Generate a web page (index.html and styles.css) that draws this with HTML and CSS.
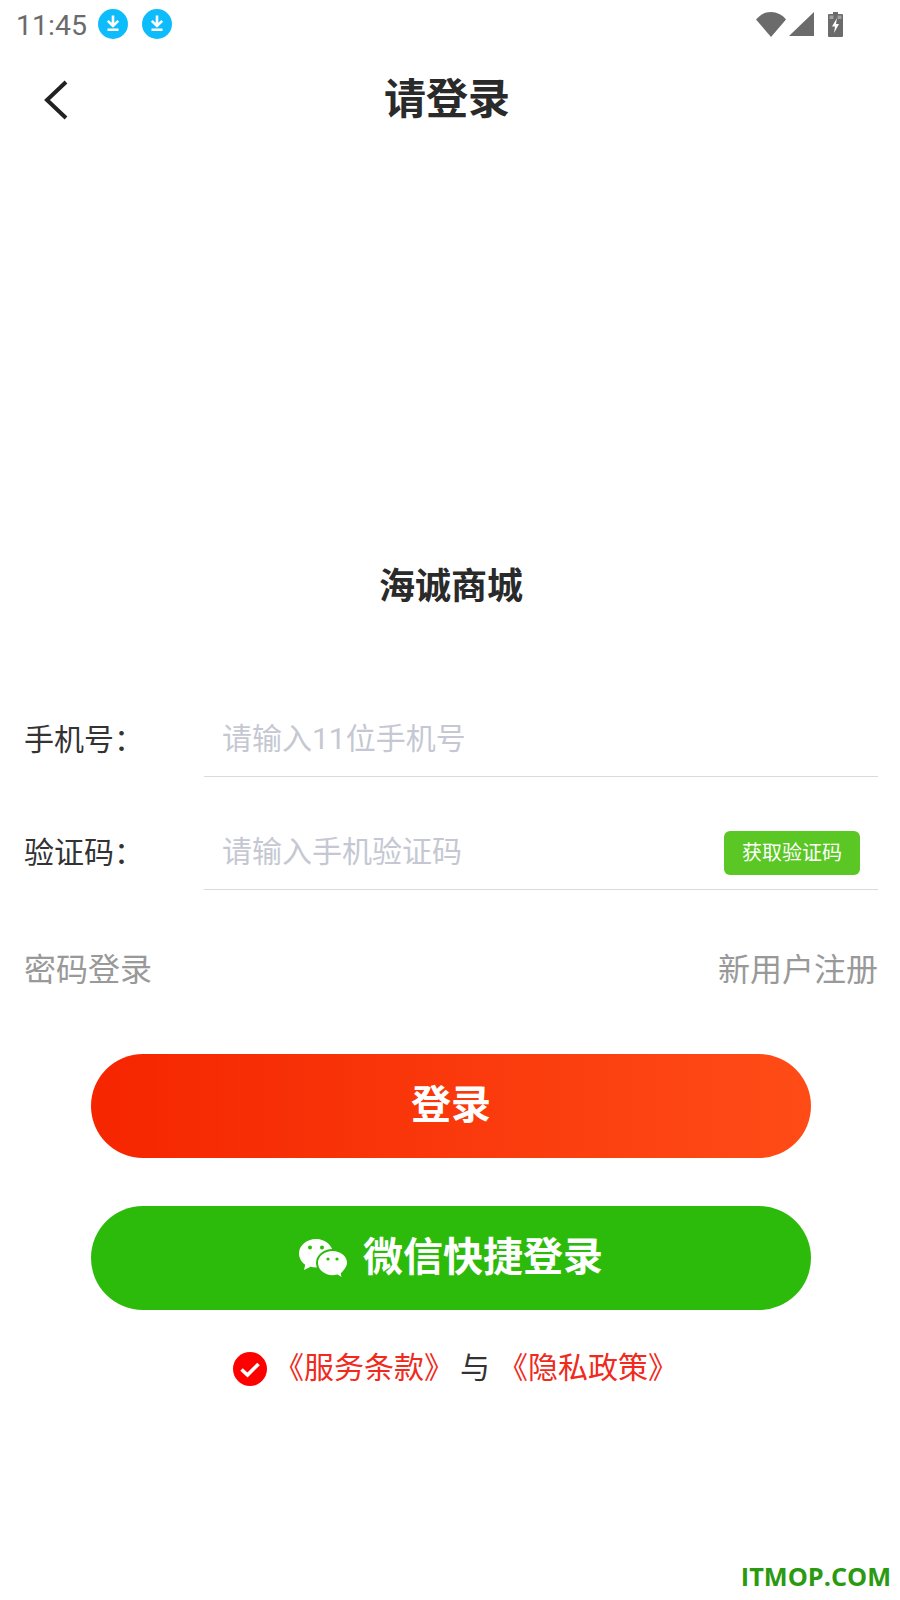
FILE: index.html
```html
<!DOCTYPE html>
<html lang="zh-CN">
<head>
<meta charset="utf-8">
<title>请登录</title>
<link rel="stylesheet" href="styles.css">
</head>
<body>
<div class="page">
  <div class="status">
    <span class="time">11:45</span>
    <svg class="dl" viewBox="0 0 30 30"><circle cx="15" cy="15" r="15" fill="#0dbcfb"/><path d="M15 6.500v10M9.800 11.800 15 17l5.200-5.200M9.500 20.800h11" fill="none" stroke="#fff" stroke-width="2.600"/></svg>
    <svg class="dl" viewBox="0 0 30 30"><circle cx="15" cy="15" r="15" fill="#0dbcfb"/><path d="M15 6.500v10M9.800 11.800 15 17l5.200-5.200M9.500 20.800h11" fill="none" stroke="#fff" stroke-width="2.600"/></svg>
    <span class="status-right">
      <svg class="wifi" viewBox="0 0 30 25"><path d="M0 7.500C4 2.800 9 0 15 0s11 2.800 15 7.500L15 25z" fill="#6b6b6b"/></svg>
      <svg class="signal" viewBox="0 0 25 24"><path d="M25 0v24H0z" fill="#6b6b6b"/></svg>
      <svg class="battery" viewBox="0 0 15 25"><path d="M5 0h5v2h4a1 1 0 0 1 1 1v21a1 1 0 0 1-1 1H1a1 1 0 0 1-1-1V3a1 1 0 0 1 1-1h4z" fill="#6b6b6b"/><path d="M1.500 3.500h4V7h-4zM9.500 3.500h4V7h-4z" fill="#a0a0a0"/><path d="M9 6 4 14.500h3L6 21l5-9H8z" fill="#fff"/></svg>
    </span>
  </div>
  <header class="nav">
    <svg class="back" viewBox="0 0 26 40"><path d="M23 2 4 20l19 18" fill="none" stroke="#222" stroke-width="4"/></svg>
    <h1 class="title">请登录</h1>
  </header>
  <div class="brand">海诚商城</div>
  <div class="form">
    <div class="row">
      <span class="label">手机号：</span>
      <div class="field"><span class="ph">请输入11位手机号</span></div>
    </div>
    <div class="row">
      <span class="label">验证码：</span>
      <div class="field"><span class="ph">请输入手机验证码</span><span class="code">获取验证码</span></div>
    </div>
  </div>
  <div class="links"><span>密码登录</span><span>新用户注册</span></div>
  <div class="btn btn-red"><span class="btn-text">登录</span></div>
  <div class="btn btn-green">
    <svg class="wx" viewBox="0 0 48 41"><path d="M17 0C7.600 0 0 6.500 0 14.500c0 4.500 2.400 8.500 6.200 11.200L5 31l6.500-3.200c1.800.5 3.600.7 5.500.7 9.400 0 17-6.300 17-14S26.400 0 17 0z" fill="#fff"/><path d="M33.500 11C25 11 18 16.800 18 24s7 13.200 15.500 13.200c1.800 0 3.500-.3 5-.7l5.500 3.500-1.200-5.200C46 31.500 49 28 49 24c0-7.200-7-13-15.500-13z" fill="#fff" stroke="#2cbb0b" stroke-width="2"/><circle cx="11" cy="8.500" r="2" fill="#2cbb0b"/><circle cx="23" cy="8.500" r="2" fill="#2cbb0b"/><circle cx="29" cy="20" r="1.600" fill="#2cbb0b"/><circle cx="38" cy="20" r="1.600" fill="#2cbb0b"/></svg>
    <span class="btn-text">微信快捷登录</span>
  </div>
  <div class="agree">
    <svg class="check" viewBox="0 0 34 34"><circle cx="17" cy="17" r="17" fill="#f00"/><path d="M8.500 17.500l6 5.500 11-11" fill="none" stroke="#fff" stroke-width="3.600"/></svg>
    <span class="red">《服务条款》</span><span class="and">与</span><span class="red">《隐私政策》</span>
  </div>
  <div class="mark">ITMOP.COM</div>
</div>
</body>
</html>
```
FILE: styles.css
```css
* { box-sizing: border-box; }
html, body { margin: 0; padding: 0; background: #fff; }
body { font-family: Roboto, "Noto Sans CJK SC", sans-serif; }
.page { width: 900px; height: 1600px; display: flex; flex-direction: column; position: relative; overflow: hidden; }
.status { height: 50px; display: flex; align-items: center; padding-left: 16px; color: #6b6b6b; }
.time { font-size: 28.500px; font-weight: 400; margin-right: 11px; }
.dl { width: 30px; height: 30px; margin-right: 14px; margin-top: -2px; }
.status-right { margin-left: auto; margin-right: 57px; display: flex; align-items: center; margin-top: -2px; }
.wifi { width: 30px; height: 25px; margin-right: 3px; }
.signal { width: 25px; height: 24px; }
.battery { width: 15px; height: 25px; margin-left: 14px; }
.nav { height: 100px; position: relative; display: flex; align-items: center; justify-content: center; padding-right: 6px; }
.back { position: absolute; left: 43px; top: 30px; width: 26px; height: 40px; }
.title { margin: 0; font-size: 42px; font-weight: 700; color: #2a2a2a; line-height: 100px; height: 100px; }
.brand { margin-top: 410px; text-align: center; font-size: 36px; font-weight: 700; color: #2a2a2a; line-height: 54px; padding-left: 2px; }
.form { margin-top: 86px; padding: 0 22px 0 24px; display: flex; flex-direction: column; gap: 37px; }
.row { display: flex; height: 76px; }
.label { width: 180px; font-size: 30px; color: #333; line-height: 80px; }
.field { flex: 1; height: 77px; border-bottom: 1px solid #d8dae0; display: flex; align-items: center; justify-content: space-between; padding: 0 18px 0 18px; }
.ph { font-size: 30px; color: #c5c8d2; margin-top: -4px; }
.code { width: 136px; height: 44px; border-radius: 6px; background: #5ac724; color: #fff; font-size: 20px; line-height: 44px; text-align: center; margin-top: 3px; }
.links { margin-top: 48px; height: 60px; padding: 0 22px 0 24px; display: flex; justify-content: space-between; font-size: 32px; color: #999; line-height: 66px; }
.btn { width: 720px; height: 104px; margin-left: 91px; border-radius: 52px; display: flex; align-items: center; justify-content: center; color: #fff; font-size: 40px; font-weight: 700; }
.btn-text { margin-top: -8px; }
.btn-red { margin-top: 57px; background: linear-gradient(90deg, #f52500, #ff4c17); }
.btn-green { margin-top: 48px; background: #2cbb0b; gap: 16px; }
.wx { width: 48px; height: 41px; margin-top: 2px; }
.agree { margin-top: 34px; display: flex; align-items: center; padding-left: 233px; font-size: 30px; height: 46px; }
.agree span { margin-top: -4px; }
.check { width: 34px; height: 34px; margin-right: 7px; margin-top: 4px; }
.red { color: #f02a1c; }
.and { color: #333; margin: 0 8px 0 6px; }
.mark { position: absolute; right: 9px; top: 1558px; font-family: "Open Sans", sans-serif; font-weight: 700; font-size: 25.300px; color: #2a9a12; line-height: 36px; }
```
